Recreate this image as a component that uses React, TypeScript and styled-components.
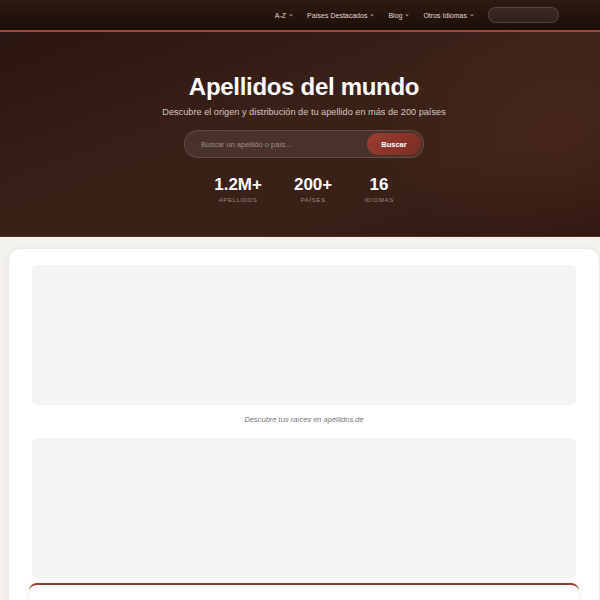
import styled, { createGlobalStyle } from "styled-components";

const GlobalStyle = createGlobalStyle`
  html, body {
    margin: 0;
    padding: 0;
    overflow: hidden;
    background: #f4f2ee;
    font-family: "Liberation Sans", Arial, sans-serif;
  }
`;

const navItems = ["A-Z", "Países Destacados", "Blog", "Otros Idiomas"];

const stats = [
  { value: "1.2M+", label: "Apellidos" },
  { value: "200+", label: "Países" },
  { value: "16", label: "Idiomas" },
];

const Caret = () => (
  <svg width="4" height="3" viewBox="0 0 4 3">
    <path d="M0 0.5h4L2 2.5z" fill="currentColor" />
  </svg>
);

const App = () => {
  return (
    <Page>
      <GlobalStyle />
      <NavBar>
        {navItems.map((item) => (
          <NavItem key={item}>
            {item}
            <Caret />
          </NavItem>
        ))}
        <NavSearch />
      </NavBar>

      <Hero>
        <Title>Apellidos del mundo</Title>
        <Subtitle>
          Descubre el origen y distribución de tu apellido en más de 200 países
        </Subtitle>
        <SearchBox>
          <SearchInput placeholder="Buscar un apellido o país..." />
          <SearchButton>Buscar</SearchButton>
        </SearchBox>
        <Stats>
          {stats.map((s) => (
            <Stat key={s.label}>
              <StatValue>{s.value}</StatValue>
              <StatLabel>{s.label}</StatLabel>
            </Stat>
          ))}
        </Stats>
      </Hero>

      <Main>
        <Card>
          <Placeholder />
          <Caption>Descubre tus raíces en apellidos.de</Caption>
          <Placeholder />
          <InnerCard />
        </Card>
      </Main>
    </Page>
  );
};

const Page = styled.div`
  width: 608px;
  min-height: 600px;
  background: #f4f2ee;
`;

const NavBar = styled.nav`
  height: 30px;
  display: flex;
  align-items: center;
  justify-content: flex-end;
  gap: 14px;
  padding-right: 49px;
  background: linear-gradient(180deg, #2f1911 0%, #1c0f0a 100%);
  border-bottom: 2px solid #a4473a;
`;

const NavItem = styled.span`
  display: flex;
  align-items: center;
  gap: 3px;
  font-size: 7px;
  color: #e4d8d2;

  svg {
    color: #9a8782;
  }
`;

const NavSearch = styled.div`
  width: 69px;
  height: 14px;
  border-radius: 8px;
  background: rgba(255, 255, 255, 0.07);
  border: 1px solid rgba(255, 255, 255, 0.14);
`;

const Hero = styled.section`
  height: 205px;
  box-sizing: border-box;
  padding-top: 40px;
  display: flex;
  flex-direction: column;
  align-items: center;
  background:
    radial-gradient(ellipse 170px 150px at 560px 105px, rgba(100, 50, 34, 0.3), transparent 100%),
    linear-gradient(160deg, #2b1510 0%, #3a2118 45%, #3a2118 70%, #2c1610 100%);
  border-bottom: 1px solid #5a2c22;
`;

const Title = styled.h1`
  margin: 0;
  font-size: 24px;
  letter-spacing: -0.3px;
  font-weight: 700;
  color: #ffffff;
  line-height: 30px;
`;

const Subtitle = styled.p`
  margin: 4px 0 0;
  font-size: 9.2px;
  color: #d8c6bf;
  line-height: 12px;
`;

const SearchBox = styled.div`
  margin-top: 12px;
  width: 240px;
  height: 28px;
  box-sizing: border-box;
  display: flex;
  align-items: center;
  padding: 0 2px 0 14px;
  border-radius: 14px;
  background: rgba(255, 255, 255, 0.08);
  border: 1px solid rgba(255, 255, 255, 0.14);
`;

const SearchInput = styled.input`
  flex: 1;
  min-width: 0;
  border: none;
  outline: none;
  background: transparent;
  font-family: inherit;
  font-size: 7.5px;
  color: #fff;

  &::placeholder {
    color: rgba(255, 255, 255, 0.45);
  }
`;

const SearchButton = styled.button`
  width: 54px;
  height: 22px;
  border: none;
  border-radius: 11px;
  background: linear-gradient(135deg, #9a3d31, #7a2d24);
  color: #fff;
  font-family: inherit;
  font-size: 7.5px;
  font-weight: 700;
`;

const Stats = styled.div`
  margin-top: 17px;
  display: flex;
  gap: 32px;
`;

const Stat = styled.div`
  display: flex;
  flex-direction: column;
  align-items: center;
`;

const StatValue = styled.div`
  font-size: 17px;
  font-weight: 700;
  color: #fff;
  line-height: 20px;
`;

const StatLabel = styled.div`
  margin-top: 2px;
  font-size: 6px;
  letter-spacing: 0.1em;
  text-transform: uppercase;
  color: #a08681;
`;

const Main = styled.main`
  padding: 12px 9px 0;
`;

const Card = styled.div`
  background: #fff;
  border-radius: 12px;
  padding: 16px 23px 0;
  box-shadow: 0 2px 10px rgba(60, 40, 20, 0.08);
  display: flex;
  flex-direction: column;
`;

const Placeholder = styled.div`
  height: 140px;
  background: #f4f4f4;
  border-radius: 5px;
`;

const Caption = styled.p`
  margin: 0;
  padding: 10px 0 14px;
  text-align: center;
  font-size: 7.5px;
  font-style: italic;
  color: #777777;
`;

const InnerCard = styled.div`
  margin: 5px -3px 0;
  height: 40px;
  background: #fff;
  border-top: 2px solid #9b3a2e;
  border-radius: 8px 8px 0 0;
  box-shadow: 0 1px 6px rgba(0, 0, 0, 0.08);
`;

export default App;
